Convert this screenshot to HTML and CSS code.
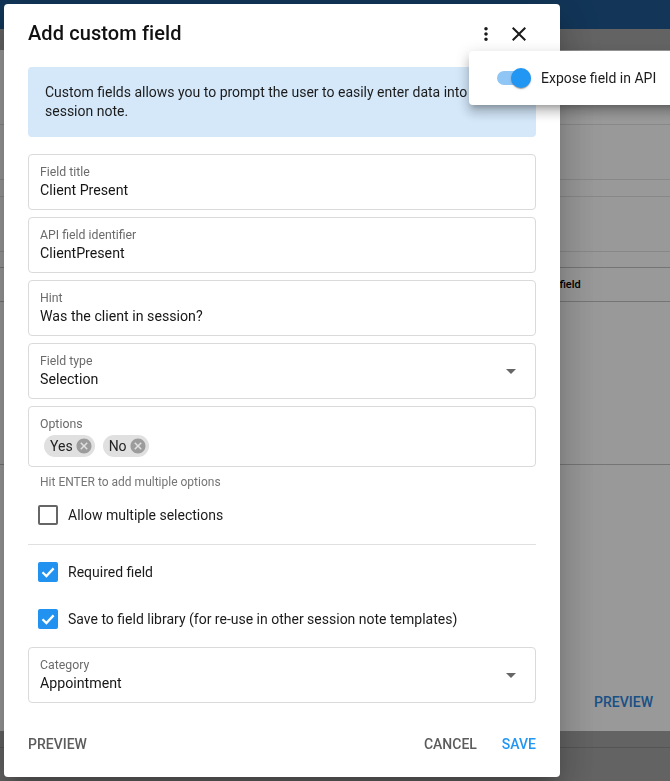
FILE: index.html
```html
<!DOCTYPE html>
<html lang="en">
<head>
<meta charset="utf-8">
<title>Session note template</title>
<link rel="stylesheet" href="styles.css">
</head>
<body>
  <div class="app">
    <header class="app-bar"></header>
    <div class="toolbar"></div>
    <main class="page">
      <div class="page-row row-a"></div>
      <div class="page-row row-b"></div>
      <div class="page-row row-c"></div>
      <div class="page-row row-d"></div>
      <div class="page-row row-e"></div>
      <div class="table-head"><span class="th">Data field</span></div>
      <div class="table-body"></div>
      <div class="page-actions"><button class="page-btn">PREVIEW</button></div>
    </main>
    <footer class="bottom-bar"><div class="bottom-line"></div></footer>
  </div>

  <div class="scrim"></div>

  <section class="dialog" role="dialog" aria-labelledby="dlg-title">
    <div class="dialog-header">
      <h2 id="dlg-title" class="dialog-title">Add custom field</h2>
      <div class="header-actions">
        <svg class="icon icon-more" viewBox="0 0 24 24"><path d="M12 8c1.1 0 2-.9 2-2s-.9-2-2-2-2 .9-2 2 .9 2 2 2zm0 2c-1.1 0-2 .9-2 2s.9 2 2 2 2-.9 2-2-.9-2-2-2zm0 6c-1.1 0-2 .9-2 2s.9 2 2 2 2-.9 2-2-.9-2-2-2z"/></svg>
        <svg class="icon icon-close" viewBox="0 0 24 24"><path d="M19 6.41L17.59 5 12 10.59 6.41 5 5 6.41 10.59 12 5 17.590 6.41 19 12 13.41 17.59 19 19 17.59 13.41 12z"/></svg>
      </div>
    </div>

    <div class="dialog-body">
      <div class="info">Custom fields allows you to prompt the user to easily enter data into the session note.</div>

      <div class="fields">
        <div class="field">
          <span class="field-label">Field title</span>
          <span class="field-value">Client Present</span>
        </div>
        <div class="field">
          <span class="field-label">API field identifier</span>
          <span class="field-value">ClientPresent</span>
        </div>
        <div class="field">
          <span class="field-label">Hint</span>
          <span class="field-value">Was the client in session?</span>
        </div>
        <div class="field field-select">
          <span class="field-label">Field type</span>
          <span class="field-value">Selection</span>
          <svg class="select-arrow" viewBox="0 0 24 24"><path d="M7 10l5 5 5-5z"/></svg>
        </div>
        <div class="field field-options">
          <span class="field-label">Options</span>
          <div class="chips">
            <span class="chip">Yes<svg class="chip-del" viewBox="0 0 24 24"><path d="M12 2C6.47 2 2 6.47 2 12s4.47 10 10 10 10-4.47 10-10S17.53 2 12 2zm5 13.59L15.59 17 12 13.41 8.41 17 7 15.59 10.59 12 7 8.41 8.41 7 12 10.59 15.59 7 17 8.41 13.41 12 17 15.59z"/></svg></span>
            <span class="chip">No<svg class="chip-del" viewBox="0 0 24 24"><path d="M12 2C6.47 2 2 6.47 2 12s4.47 10 10 10 10-4.47 10-10S17.53 2 12 2zm5 13.59L15.59 17 12 13.41 8.41 17 7 15.59 10.59 12 7 8.41 8.41 7 12 10.59 15.59 7 17 8.41 13.41 12 17 15.59z"/></svg></span>
          </div>
        </div>
      </div>

      <p class="helper">Hit ENTER to add multiple options</p>

      <label class="check-row row-multi">
        <span class="box"></span>
        <span class="check-label">Allow multiple selections</span>
      </label>

      <hr class="divider">

      <label class="check-row row-required">
        <span class="box checked"><svg viewBox="0 0 20 20"><polyline points="4.5,10.2 8.4,14 15.6,6.4"/></svg></span>
        <span class="check-label">Required field</span>
      </label>

      <label class="check-row row-library">
        <span class="box checked"><svg viewBox="0 0 20 20"><polyline points="4.5,10.2 8.4,14 15.6,6.4"/></svg></span>
        <span class="check-label">Save to field library (for re-use in other session note templates)</span>
      </label>

      <div class="field field-select field-category">
        <span class="field-label">Category</span>
        <span class="field-value">Appointment</span>
        <svg class="select-arrow" viewBox="0 0 24 24"><path d="M7 10l5 5 5-5z"/></svg>
      </div>
    </div>

    <div class="dialog-footer">
      <button class="text-btn">PREVIEW</button>
      <div class="footer-right">
        <button class="text-btn">CANCEL</button>
        <button class="text-btn primary">SAVE</button>
      </div>
    </div>
  </section>

  <div class="menu">
    <div class="menu-item">
      <span class="switch"><span class="thumb"></span></span>
      <span class="menu-label">Expose field in API</span>
    </div>
  </div>
</body>
</html>
```

FILE: styles.css
```css
* { box-sizing: border-box; }

html, body {
  margin: 0;
  padding: 0;
  width: 670px;
  height: 781px;
  overflow: hidden;
  font-family: Roboto, "Noto Sans", Arial, sans-serif;
  color: rgba(0, 0, 0, 0.87);
  background: #fff;
}

/* ---------- underlying page ---------- */
.app {
  display: flex;
  flex-direction: column;
  height: 781px;
}

.app-bar {
  height: 29px;
  background: #1e5993;
}

.toolbar {
  height: 21px;
  background: #a6a6a6;
}

.page {
  display: flex;
  flex-direction: column;
  height: 681px;
  background: #fff;
}

.page-row { border-bottom: 1px solid #e3e3e3; }
.row-a { height: 75px; }
.row-b { height: 55px; }
.row-c { height: 17px; }
.row-d { height: 55px; }
.row-e { height: 16px; border-bottom-color: #c4c4c4; }

.table-head {
  height: 34px;
  display: flex;
  align-items: center;
  padding-left: 534px;
  border-bottom: 1px solid #c4c4c4;
}

.th {
  font-size: 11px;
  font-weight: 500;
  color: #000;
}

.table-body {
  height: 163px;
  border-bottom: 1px solid #c4c4c4;
}

.page-actions {
  flex: 1;
  display: flex;
  justify-content: flex-end;
  align-items: flex-end;
  padding: 0 17px 21px 0;
}

.page-btn {
  border: 0;
  background: none;
  padding: 0;
  font: 500 14px Roboto, sans-serif;
  color: #2a86e0;
}

.bottom-bar {
  height: 50px;
  background: #a6a6a6;
  padding-top: 16px;
}

.bottom-line {
  height: 1px;
  background: #8e8e8e;
}

.scrim {
  position: fixed;
  inset: 0;
  background: rgba(0, 0, 0, 0.4);
}

/* ---------- dialog ---------- */
.dialog {
  position: fixed;
  left: 4px;
  top: 4px;
  width: 556px;
  height: 773px;
  background: #fff;
  border-radius: 4px;
  display: flex;
  flex-direction: column;
  box-shadow: 0 11px 15px -7px rgba(0,0,0,0.2), 0 24px 38px 3px rgba(0,0,0,0.14), 0 9px 46px 8px rgba(0,0,0,0.12);
}

.dialog-header {
  display: flex;
  align-items: center;
  justify-content: space-between;
  height: 32px;
  margin-top: 13px;
  padding: 0 29px 0 24px;
}

.dialog-title {
  margin: 0;
  font-size: 20px;
  font-weight: 500;
  line-height: 32px;
  letter-spacing: 0.1px;
  color: #111;
}

.header-actions {
  display: flex;
  align-items: center;
  gap: 9px;
  margin-top: 2px;
}

.icon { width: 24px; height: 24px; fill: #1a1a1a; }
.icon-more { transform: scale(0.86); }

.dialog-body {
  padding: 0 24px;
  margin-top: 18px;
  display: flex;
  flex-direction: column;
}

.info {
  height: 70px;
  padding: 16px 17px 16px;
  background: #d4e8fa;
  border-radius: 4px;
  font-size: 14px;
  line-height: 19px;
  color: #1b1b1b;
}

.fields {
  margin-top: 17px;
  display: flex;
  flex-direction: column;
  gap: 7px;
}

.field {
  position: relative;
  height: 56px;
  border: 1px solid #dadada;
  border-radius: 4px;
  padding: 9px 11px 9px;
  display: flex;
  flex-direction: column;
}

.field-label {
  font-size: 12.3px;
  line-height: 16px;
  color: #6b6b6b;
}

.field-value {
  font-size: 14.2px;
  line-height: 20px;
  color: #161616;
}

.select-arrow {
  position: absolute;
  right: 12px;
  top: 15px;
  width: 24px;
  height: 24px;
  fill: #666;
}

.field-options { height: 61px; }

.chips {
  display: flex;
  gap: 8px;
  margin-top: 3px;
  margin-left: 4px;
}

.chip {
  display: inline-flex;
  align-items: center;
  height: 22px;
  padding: 0 2px 0 6px;
  border-radius: 11px;
  background: #e0e0e0;
  font-size: 14px;
  color: #222;
}

.chip-del {
  width: 18px;
  height: 18px;
  margin-left: 2px;
  fill: #9c9c9c;
}

.helper {
  margin: 7px 0 0 12px;
  font-size: 12px;
  line-height: 16px;
  color: #757575;
}

.check-row {
  display: flex;
  align-items: center;
  height: 42px;
  padding-left: 10px;
}

.row-multi { margin-top: 4px; }
.row-required { margin-top: 6px; }
.row-library { margin-top: 5px; }

.box {
  width: 20px;
  height: 20px;
  border: 2px solid #666;
  border-radius: 2px;
  flex: none;
}

.box.checked {
  border: 0;
  background: #2192f0;
}

.box svg {
  display: block;
  width: 20px;
  height: 20px;
  fill: none;
  stroke: #fff;
  stroke-width: 2.3;
}

.check-label {
  margin-left: 10px;
  font-size: 14px;
  color: #1b1b1b;
}

.divider {
  margin: 8px 0 0;
  border: 0;
  height: 1px;
  background: #e0e0e0;
}

.field-category { margin-top: 7px; }

.dialog-footer {
  margin-top: auto;
  height: 36px;
  margin-bottom: 15px;
  padding: 0 24px;
  display: flex;
  align-items: center;
  justify-content: space-between;
}

.footer-right {
  display: flex;
  gap: 25px;
}

.text-btn {
  border: 0;
  background: none;
  padding: 0;
  font: 500 14px Roboto, sans-serif;
  color: #5c5c5c;
}

.text-btn.primary { color: #2196f3; }

/* ---------- overflow menu ---------- */
.menu {
  position: fixed;
  left: 469px;
  top: 51px;
  width: 220px;
  height: 54px;
  background: #fff;
  border-radius: 4px;
  box-shadow: 0 5px 5px -3px rgba(0,0,0,0.2), 0 8px 10px 1px rgba(0,0,0,0.14), 0 3px 14px 2px rgba(0,0,0,0.12);
}

.menu-item {
  display: flex;
  align-items: center;
  height: 54px;
  padding-left: 28px;
}

.switch {
  position: relative;
  width: 34px;
  height: 14px;
  border-radius: 7px;
  background: #90c6f5;
}

.thumb {
  position: absolute;
  right: 0;
  top: -3px;
  width: 20px;
  height: 20px;
  border-radius: 50%;
  background: #2196f3;
  box-shadow: 0 2px 1px -1px rgba(0,0,0,0.2), 0 1px 1px rgba(0,0,0,0.14), 0 1px 3px rgba(0,0,0,0.12);
}

.menu-label {
  margin-left: 10px;
  font-size: 14px;
  color: #1b1b1b;
}
```
